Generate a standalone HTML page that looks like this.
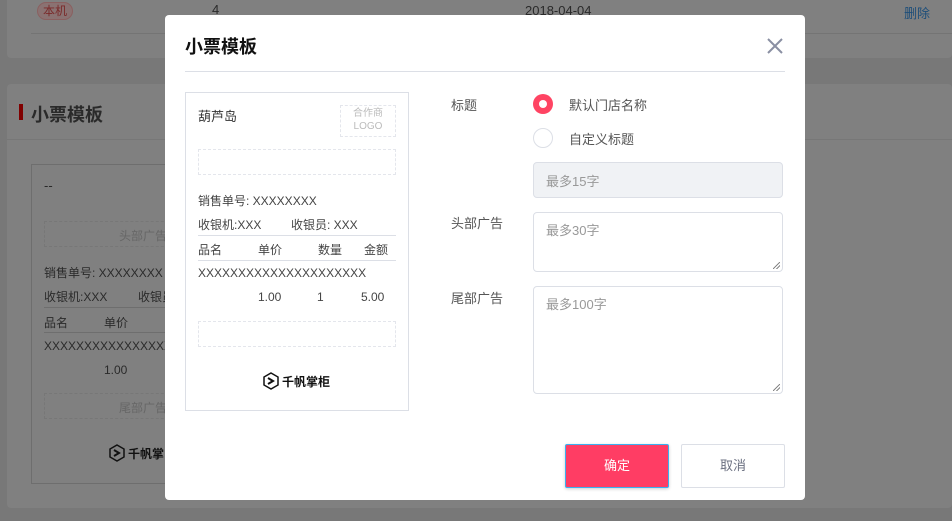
<!DOCTYPE html>
<html><head><meta charset="utf-8">
<style>
*{margin:0;padding:0;box-sizing:border-box}
body{width:952px;height:521px;overflow:hidden;position:relative;background:#787878;font-family:"Liberation Sans","Noto Sans CJK SC",sans-serif;font-size:13px;color:#333}
.a{position:absolute;white-space:nowrap}
.card{position:absolute;background:#808080}
.d{position:absolute;border:1px dashed #777}
.m{position:absolute;left:165px;top:15px;width:640px;height:485px;background:#fff;border-radius:4px}
.rc{color:#444;font-size:12px}
.dash{position:absolute;border:1px dashed #e4e6ec}
.inp{position:absolute;left:368px;width:250px;border:1px solid #dcdfe6;border-radius:4px;color:#999;font-size:13px;padding:7px 12px}
.grip{position:absolute;right:2px;bottom:2px;width:7px;height:7px;background:linear-gradient(135deg,transparent 45%,#888 45%,#888 55%,transparent 55%,transparent 70%,#888 70%,#888 80%,transparent 80%)}
</style></head><body>
<div class="card" style="left:7px;top:0;width:945px;height:58px;border-radius:0 0 4px 4px"></div>
<div class="a" style="left:37px;top:2px;width:36px;height:18px;border:1px solid #8a6060;border-radius:9px;background:#8a7272;color:#7a2a2a;font-size:12px;text-align:center;line-height:16px">本机</div>
<div class="a" style="left:212px;top:2px;color:#2a2a2a;font-size:13px">4</div>
<div class="a" style="left:525px;top:3px;color:#2a2a2a;font-size:13px">2018-04-04</div>
<div class="a" style="left:904px;top:3px;color:#1d4e7a;font-size:13px">删除</div>
<div class="a" style="left:31px;top:33px;width:921px;height:1px;background:#747474"></div>
<div class="card" style="left:7px;top:84px;width:945px;height:424px;border-radius:4px"></div>
<div class="a" style="left:19px;top:104px;width:4px;height:16px;background:#800000"></div>
<div class="a" style="left:31px;top:101px;font-size:18px;font-weight:bold;color:#2a2a2a">小票模板</div>
<div class="a" style="left:7px;top:139px;width:945px;height:1px;background:#777"></div>
<div class="a" style="left:31px;top:164px;width:150px;height:320px;border:1px solid #6e6e6e"></div>
<div class="a" style="left:44px;top:178px;color:#2a2a2a">--</div>
<div class="d" style="left:44px;top:221px;width:130px;height:26px"></div>
<div class="a" style="left:119px;top:227px;color:#666;font-size:12px">头部广告</div>
<div class="a" style="left:44px;top:264px;color:#2a2a2a;font-size:12px">销售单号: XXXXXXXX</div>
<div class="a" style="left:44px;top:288px;color:#2a2a2a;font-size:12px">收银机:XXX</div>
<div class="a" style="left:138px;top:288px;color:#2a2a2a;font-size:12px">收银员</div>
<div class="a" style="left:44px;top:307px;width:130px;height:1px;background:#6e6e6e"></div>
<div class="a" style="left:44px;top:314px;color:#2a2a2a;font-size:12px">品名</div>
<div class="a" style="left:104px;top:314px;color:#2a2a2a;font-size:12px">单价</div>
<div class="a" style="left:44px;top:332px;width:130px;height:1px;background:#6e6e6e"></div>
<div class="a" style="left:44px;top:339px;color:#2a2a2a;font-size:12px">XXXXXXXXXXXXXXXXX</div>
<div class="a" style="left:104px;top:363px;color:#2a2a2a;font-size:12px">1.00</div>
<div class="d" style="left:44px;top:393px;width:130px;height:26px"></div>
<div class="a" style="left:119px;top:399px;color:#666;font-size:12px">尾部广告</div>
<svg class="a" style="left:108px;top:444px" width="18" height="18" viewBox="0 0 18 18"><path d="M9 1L16 5V13L9 17L2 13V5Z" fill="none" stroke="#111" stroke-width="1.5"/><path d="M6 6L11 9L6 12" fill="none" stroke="#111" stroke-width="2"/></svg>
<div class="a" style="left:128px;top:445px;color:#111;font-size:12px;font-weight:bold">千帆掌</div>

<div class="m">
  <div class="a" style="left:20px;top:18px;font-size:18px;font-weight:bold;color:#111">小票模板</div>
  <svg class="a" style="left:601px;top:22px" width="18" height="18" viewBox="0 0 18 18"><path d="M2 2L16 16M16 2L2 16" stroke="#8a8fa3" stroke-width="2"/></svg>
  <div class="a" style="left:20px;top:56px;width:600px;height:1px;background:#dcdfe6"></div>
  <div class="a" style="left:20px;top:77px;width:224px;height:319px;border:1px solid #dcdfe6"></div>
  <div class="a rc" style="left:33px;top:91px;font-size:13px;color:#333">葫芦岛</div>
  <div class="dash" style="left:175px;top:90px;width:56px;height:32px"></div>
  <div class="a" style="left:175px;top:92px;width:56px;text-align:center;color:#bbb;font-size:10px;line-height:13px">合作商<br>LOGO</div>
  <div class="dash" style="left:33px;top:134px;width:198px;height:26px"></div>
  <div class="a rc" style="left:33px;top:177px">销售单号: XXXXXXXX</div>
  <div class="a rc" style="left:33px;top:201px">收银机:XXX</div>
  <div class="a rc" style="left:126px;top:201px">收银员: XXX</div>
  <div class="a" style="left:33px;top:220px;width:198px;height:1px;background:#dcdfe6"></div>
  <div class="a rc" style="left:33px;top:226px">品名</div>
  <div class="a rc" style="left:93px;top:226px">单价</div>
  <div class="a rc" style="left:153px;top:226px">数量</div>
  <div class="a rc" style="left:199px;top:226px">金额</div>
  <div class="a" style="left:33px;top:245px;width:198px;height:1px;background:#dcdfe6"></div>
  <div class="a rc" style="left:33px;top:251px">XXXXXXXXXXXXXXXXXXXXX</div>
  <div class="a rc" style="left:93px;top:275px">1.00</div>
  <div class="a rc" style="left:152px;top:275px">1</div>
  <div class="a rc" style="left:196px;top:275px">5.00</div>
  <div class="dash" style="left:33px;top:306px;width:198px;height:26px"></div>
  <svg class="a" style="left:97px;top:357px" width="18" height="18" viewBox="0 0 18 18"><path d="M9 1L16 5V13L9 17L2 13V5Z" fill="none" stroke="#111" stroke-width="1.5"/><path d="M6 6L11 9L6 12" fill="none" stroke="#111" stroke-width="2"/></svg>
  <div class="a" style="left:117px;top:358px;font-size:12px;font-weight:bold;color:#111">千帆掌柜</div>
  <div class="a" style="left:286px;top:80px;color:#555">标题</div>
  <div class="a" style="left:368px;top:79px;width:20px;height:20px;border-radius:50%;background:#ff4463"></div>
  <div class="a" style="left:374px;top:85px;width:8px;height:8px;border-radius:50%;background:#fff"></div>
  <div class="a" style="left:404px;top:80px;color:#555">默认门店名称</div>
  <div class="a" style="left:368px;top:113px;width:20px;height:20px;border-radius:50%;border:1px solid #dcdfe6"></div>
  <div class="a" style="left:404px;top:114px;color:#555">自定义标题</div>
  <div class="inp" style="top:147px;height:36px;background:#f0f2f5;padding-top:8px">最多15字</div>
  <div class="a" style="left:286px;top:198px;color:#555">头部广告</div>
  <div class="inp" style="top:197px;height:60px">最多30字<div class="grip"></div></div>
  <div class="a" style="left:286px;top:273px;color:#555">尾部广告</div>
  <div class="inp" style="top:271px;height:108px">最多100字<div class="grip"></div></div>
  <div class="a" style="left:400px;top:429px;width:104px;height:44px;background:#ff3d64;border:1px solid #3ab0f0;border-radius:2px;color:#fff;font-size:13px;text-align:center;line-height:42px;box-shadow:0 1px 3px rgba(0,0,0,.2)">确定</div>
  <div class="a" style="left:516px;top:429px;width:104px;height:44px;border:1px solid #dcdfe6;border-radius:2px;color:#6a6f80;font-size:13px;text-align:center;line-height:42px">取消</div>
</div>
</body></html>
